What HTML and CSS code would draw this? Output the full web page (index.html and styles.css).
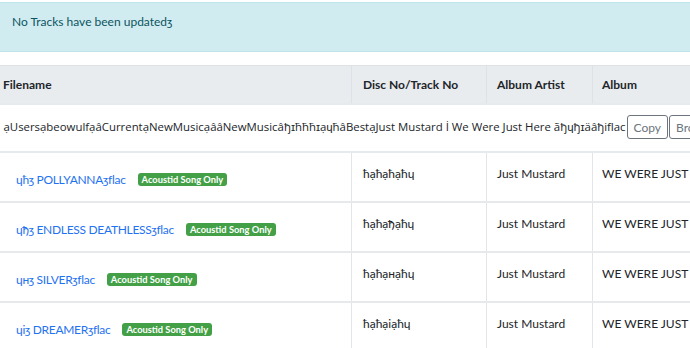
FILE: index.html
```html
<!DOCTYPE html>
<html>
<head>
<meta charset="utf-8">
<link rel="stylesheet" href="styles.css">
</head>
<body>
<div class="page">
  <div class="alert">No Tracks have been updatedʒ</div>
  <table class="tracks">
    <colgroup>
      <col class="c-file"><col class="c-disc"><col class="c-artist"><col class="c-album">
    </colgroup>
    <thead>
      <tr><th>Filename</th><th>Disc No/Track No</th><th>Album Artist</th><th>Album</th></tr>
    </thead>
    <tbody>
      <tr class="path-row">
        <td colspan="4">
          <div class="path">
            <span class="path-text">ạUsersạbeowulfạâCurrentạNewMusicạââNewMusicâђɪħħħɪạɥħâBestạJust Mustard İ We Were Just Here ãђɥђɪäâђiflac</span>
            <button class="btn">Copy</button>
            <button class="btn">Browse</button>
          </div>
        </td>
      </tr>
      <tr>
        <td class="file"><a href="#">ɥħʒ POLLYANNAʒflac</a><span class="badge">Acoustid Song Only</span></td>
        <td>ħạħạħạħɥ</td><td>Just Mustard</td><td>WE WERE JUST HERE</td>
      </tr>
      <tr>
        <td class="file"><a href="#">ɥђʒ ENDLESS DEATHLESSʒflac</a><span class="badge">Acoustid Song Only</span></td>
        <td>ħạħạђạħɥ</td><td>Just Mustard</td><td>WE WERE JUST HERE</td>
      </tr>
      <tr>
        <td class="file"><a href="#">ɥнʒ SILVERʒflac</a><span class="badge">Acoustid Song Only</span></td>
        <td>ħạħạнạħɥ</td><td>Just Mustard</td><td>WE WERE JUST HERE</td>
      </tr>
      <tr>
        <td class="file"><a href="#">ɥiʒ DREAMERʒflac</a><span class="badge">Acoustid Song Only</span></td>
        <td>ħạħạiạħɥ</td><td>Just Mustard</td><td>WE WERE JUST HERE</td>
      </tr>
    </tbody>
  </table>
</div>
</body>
</html>
```

FILE: styles.css
```css
html, body {
  margin: 0;
  padding: 0;
  background: #fff;
  overflow: hidden;
}
body {
  font-family: "Lato", "Liberation Sans", sans-serif;
  font-size: 12px;
  color: #212529;
}
.page {
  margin-left: -9px;
  width: 900px;
  padding-top: 2px;
}
.alert {
  background: #d1ecf1;
  border: 1px solid #bee5eb;
  color: #0c5460;
  font-size: 12px;
  padding: 9px 20px 19px 20px;
  line-height: 20px;
  margin-bottom: 13px;
}
.tracks {
  border-collapse: collapse;
  table-layout: fixed;
  width: 900px;
}
.c-file { width: 360px; }
.c-disc { width: 135px; }
.c-artist { width: 106px; }
.c-album { width: 299px; }
.tracks th {
  background: #e9ecef;
  text-align: left;
  font-weight: 700;
  padding: 9px 10px 8px 11px;
  line-height: 20px;
  border: 1px solid #dee2e6;
  white-space: nowrap;
}
.tracks th:nth-child(3) { padding-left: 10px; }
.tracks th:nth-child(4) { padding-left: 9px; }
.tracks td {
  padding: 11px 10px 17px 11px;
  line-height: 20px;
  border: 1px solid #e3e6e9;
  border-top: 2px solid #e7eaed;
  vertical-align: top;
  white-space: nowrap;
  overflow: hidden;
}
.tracks td:nth-child(3) { padding-left: 10px; }
.tracks td:nth-child(4) { padding-left: 9px; }
.tracks td.file {
  padding: 17px 10px 11px 24px;
}
.path-row td {
  padding: 10px 0 12px 12px;
  border-left: none;
  border-right: none;
}
.path {
  display: flex;
  align-items: center;
  white-space: nowrap;
}
.path-text {
  font-family: "Open Sans", "Liberation Sans", sans-serif;
  font-size: 11.4px;
  line-height: 24px;
}
.btn {
  font-family: "Lato", sans-serif;
  font-size: 12px;
  color: #6c757d;
  background: #fff;
  border: 1px solid #6c757d;
  border-radius: 3px;
  padding: 0 6px;
  height: 24px;
  margin-left: 1px;
}
.file a {
  color: #1f72f0;
  text-decoration: none;
  letter-spacing: -0.3px;
}
.badge {
  display: inline-block;
  margin-left: 12px;
  background: #43a047;
  color: #fff;
  font-size: 9.3px;
  font-weight: 700;
  line-height: 13px;
  padding: 0 4px;
  border-radius: 3px;
  vertical-align: 1px;
}
```
